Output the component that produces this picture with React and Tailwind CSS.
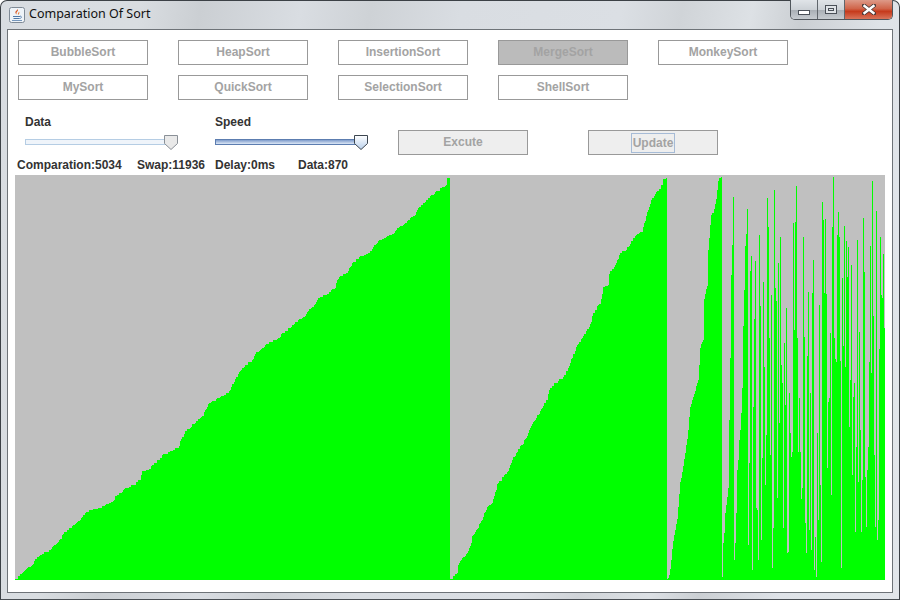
const seg1Trace = [[0,1215],[15,1200],[40,1180],[75,1140],[105,1125],[125,1105],[150,1070],[180,1050],[205,1022],[225,1005],[255,998],[295,980],[300,965],[325,945],[355,930],[375,915],[380,890],[405,878],[445,840],[490,820],[495,797],[510,772],[530,750],[560,725],[580,690],[615,665],[640,655],[650,630],[660,612],[685,575],[705,560],[725,530],[745,515],[775,498],[810,472],[835,450],[860,430],[890,395],[905,375],[960,340],[965,312],[995,295],[1015,262],[1035,245],[1065,230],[1085,200],[1105,195],[1135,175],[1160,150],[1195,125],[1215,92],[1240,72],[1260,55],[1275,42],[1293,33],[1296,8],[1302,8]];
const seg2Trace = [[15,1215],[18,1212],[35,1195],[40,1170],[60,1140],[75,1115],[82,1085],[100,1055],[125,1000],[140,985],[155,930],[175,905],[190,890],[205,850],[220,825],[235,805],[265,740],[285,712],[293,690],[305,675],[312,645],[325,630],[350,610],[362,590],[375,560],[388,535],[395,512],[415,480],[432,460],[445,415],[465,385],[475,340],[490,330],[492,295],[510,270],[522,240],[550,215],[562,195],[575,180],[590,170],[600,135],[610,105],[615,85],[628,60],[650,30],[655,12],[664,10]];
const seg1 = seg1Trace.map(([px, py]) => [15 + Math.round(px / 3), 175 + Math.round(py / 3)]);
const seg2 = seg2Trace.map(([px, py]) => [445 + Math.round(px / 3), 175 + Math.round(py / 3)]);
const seg3 = [[667,580],[668,578],[670,570],[673,540],[677,520],[680,483],[687,440],[690,407],[698,380],[700,347],[703,340],[704,300],[707,285],[708,250],[710,225],[711,215],[714,210],[716,200],[718,180],[720,177],[721,177]];
const randomTops = [577,543,533,513,505,497,488,420,358,275,245,197,560,543,513,470,460,440,430,413,388,326,290,246,234,209,545,463,271,256,570,407,319,261,508,510,560,235,306,540,458,282,367,485,435,198,227,338,455,295,568,528,190,288,301,498,263,423,237,365,383,528,343,405,308,553,552,393,433,457,452,223,330,222,186,338,452,398,452,499,488,237,337,523,553,356,292,530,393,550,293,260,570,537,577,433,520,305,485,562,202,220,293,219,294,468,402,398,333,495,227,177,338,359,362,235,212,237,361,568,278,346,226,367,241,277,247,427,380,265,475,397,383,532,447,240,482,332,430,532,480,218,272,477,527,470,447,362,246,373,181,316,455,527,211,540,520,349,237,295,298,254,328];

function staircase(points) {
  const out = [];
  let seed = 7;
  let prev = 999;
  for (let i = 0; i < points.length - 1; i++) {
    const [x0, y0] = points[i];
    const [x1, y1] = points[i + 1];
    for (let x = x0; x < x1; x++) {
      seed = (seed * 137 + 59) % 1009;
      const t = (x - x0) / (x1 - x0);
      const y = Math.round(y0 + (y1 - y0) * t + (seed % 3) - 1);
      prev = Math.min(prev, y);
      out.push([x, prev]);
    }
  }
  const last = points[points.length - 1];
  out.push([last[0], last[1]]);
  return out;
}

const bars = [
  ...staircase(seg1),
  ...staircase(seg2),
  ...staircase(seg3),
  ...randomTops.map((y, i) => [722 + i, y]),
];

function SortButton({ label, active }) {
  return (
    <button className={`w-[130px] h-[25px] border border-[#999999] text-[#a3a3a3] text-[12px] font-bold pb-[2px] ${active ? "bg-[#bbbbbb] text-[#999999]" : "bg-white"}`}>
      {label}
    </button>
  );
}

function Thumb({ focused }) {
  return (
    <svg width="16" height="17" viewBox="0 0 16 17">
      <defs>
        <linearGradient id="thumbFocus" x1="0" y1="0" x2="0" y2="1">
          <stop offset="0" stopColor="#ffffff" />
          <stop offset="1" stopColor="#b9d0ec" />
        </linearGradient>
      </defs>
      <path
        d="M1.5 1.5 H14.5 V9.5 L8 15.5 L1.5 9.5 Z"
        fill={focused ? "url(#thumbFocus)" : "#e9e9e9"}
        stroke={focused ? "#3d4650" : "#8a9097"}
        strokeWidth="1"
      />
    </svg>
  );
}

function Slider({ focused }) {
  return (
    <div className="relative w-[153px] h-[25px]">
      <div className={`absolute left-0 top-[9px] w-[142px] h-[6px] border ${focused ? "border-[#5c7db0] bg-[linear-gradient(#7f9ccb,#dce7f6)]" : "border-[#b5cde4] bg-[#eff4fa]"}`} />
      <div className="absolute left-[138px] top-[4px] flex">
        <Thumb focused={focused} />
      </div>
    </div>
  );
}

function JavaIcon() {
  return (
    <svg width="16" height="16" viewBox="0 0 16 16">
      <rect x="0.5" y="0.5" width="15" height="15" rx="2" fill="#eef3f8" stroke="#7f8a96" />
      <path d="M8.5 2 C10.5 4 6 5 8 7.5 C6 6.5 6 5 7 4 C7.8 3.2 8.6 3 8.5 2 Z" fill="#d9541e" />
      <path d="M10 4.5 C9.5 6 8.5 6.5 9 8 C10 7 11 6 10 4.5 Z" fill="#e8782c" />
      <path d="M4 9 H11 V10 H4 Z M4.5 11 H10.5 V12 H4.5 Z M3 13 H13 V13.8 H3 Z" fill="#4f79a8" />
      <path d="M11 9 C13 9 13 11.5 10.5 11.5" fill="none" stroke="#4f79a8" strokeWidth="0.8" />
    </svg>
  );
}

function WindowButtons() {
  return (
    <div className="flex h-[20px] w-[103px] rounded-b-[5px] border border-t-0 border-[#50565c] overflow-hidden shrink-0">
      <div className="w-[27px] h-full border-r border-[#60666c] flex items-center justify-center bg-[linear-gradient(#e0e4e8_0%,#ccd1d6_50%,#aab0b6_55%,#c6cbd0_100%)]">
        <div className="w-[12px] h-[5px] mt-[5px] bg-white border border-[#4a5058]" />
      </div>
      <div className="w-[27px] h-full border-r border-[#60666c] flex items-center justify-center bg-[linear-gradient(#e0e4e8_0%,#ccd1d6_50%,#aab0b6_55%,#c6cbd0_100%)]">
        <div className="w-[12px] h-[9px] border border-[#4a5058] bg-[#dfe3e7] flex items-center justify-center">
          <div className="w-[6px] h-[3px] border border-[#4a5058]" />
        </div>
      </div>
      <div className="flex-1 h-full flex items-center justify-center bg-[linear-gradient(#dd9a88_0%,#d0654a_45%,#c63a1c_60%,#d9745a_100%)]">
        <svg width="14" height="11" viewBox="0 0 14 11">
          <path d="M2 1.5 L12 9.5 M12 1.5 L2 9.5" stroke="#4a3a38" strokeWidth="4" strokeLinecap="square" />
          <path d="M2.5 2 L11.5 9 M11.5 2 L2.5 9" stroke="#ffffff" strokeWidth="2.4" strokeLinecap="square" />
        </svg>
      </div>
    </div>
  );
}

export default function App() {
  return (
    <div className="w-[900px] h-[600px] bg-white font-['Liberation_Sans',Arial,sans-serif]">
      <div className="w-full h-full flex flex-col rounded-t-[7px] border border-[#3c4146] border-b-[#4a4f54] bg-[linear-gradient(100deg,#d8dce1_0%,#d9dde1_14%,#cbcfd3_20%,#d9dde2_30%,#ced2d6_37%,#d9dde2_46%,#dbdfe4_62%,#d0d4d8_68%,#dde1e5_75%,#cbcfd3_80%,#dfe3e8_88%,#e2e6ea_100%)]">
        <div className="h-[28px] flex items-start justify-between pl-[8px] pr-[6px] shrink-0">
          <div className="flex items-center gap-[4px] h-[27px]">
            <JavaIcon />
            <span className="text-[12.5px] leading-none text-[#111111] font-['Noto_Sans',sans-serif]">Comparation Of Sort</span>
          </div>
          <div className="-mt-px flex"><WindowButtons /></div>
        </div>
        <div className="ml-[6px] w-[886px] h-[564px] border border-[#6e7378] bg-white flex flex-col shrink-0">
          <div className="ml-[10px] mt-[10px] flex gap-[30px]">
            <SortButton label="BubbleSort" />
            <SortButton label="HeapSort" />
            <SortButton label="InsertionSort" />
            <SortButton label="MergeSort" active />
            <SortButton label="MonkeySort" />
          </div>
          <div className="ml-[10px] mt-[10px] flex gap-[30px]">
            <SortButton label="MySort" />
            <SortButton label="QuickSort" />
            <SortButton label="SelectionSort" />
            <SortButton label="ShellSort" />
          </div>
          <div className="ml-[10px] mt-[12px] flex items-end text-[12px] font-bold text-[#333333]">
            <div className="w-[197px] pl-[7px] flex flex-col">
              <div className="h-[18px] leading-[20px]">Data</div>
              <Slider />
            </div>
            <div className="w-[183px] flex flex-col">
              <div className="h-[18px] leading-[20px]">Speed</div>
              <Slider focused />
            </div>
            <button className="w-[130px] h-[25px] border border-[#999999] bg-[#eeeeee] text-[#a3a3a3] font-bold text-[12px] pb-[1px]">Excute</button>
            <button className="ml-[60px] w-[130px] h-[25px] border border-[#999999] bg-[#eeeeee] text-[#a3a3a3] font-bold text-[12px] flex items-center justify-center">
              <span className="border border-[#a6bbd6] h-[20px] px-[1px] leading-[18px]">Update</span>
            </button>
          </div>
          <div className="ml-[9px] h-[20px] flex items-start pt-[1px] text-[12px] leading-[18px] font-bold text-[#333333]">
            <span className="w-[120px]">Comparation:5034</span>
            <span className="w-[78px]">Swap:11936</span>
            <span className="w-[83px]">Delay:0ms</span>
            <span>Data:870</span>
          </div>
          <svg
            className="ml-[7px] block shrink-0"
            width="870"
            height="405"
            viewBox="15 175 870 405"
            shapeRendering="crispEdges"
          >
            <rect x="15" y="175" width="870" height="405" fill="#c0c0c0" />
            {bars.map(([x, y]) => (
              <rect key={x} x={x} y={y} width="1" height={580 - y} fill="#00ff00" />
            ))}
          </svg>
        </div>
      </div>
    </div>
  );
}
